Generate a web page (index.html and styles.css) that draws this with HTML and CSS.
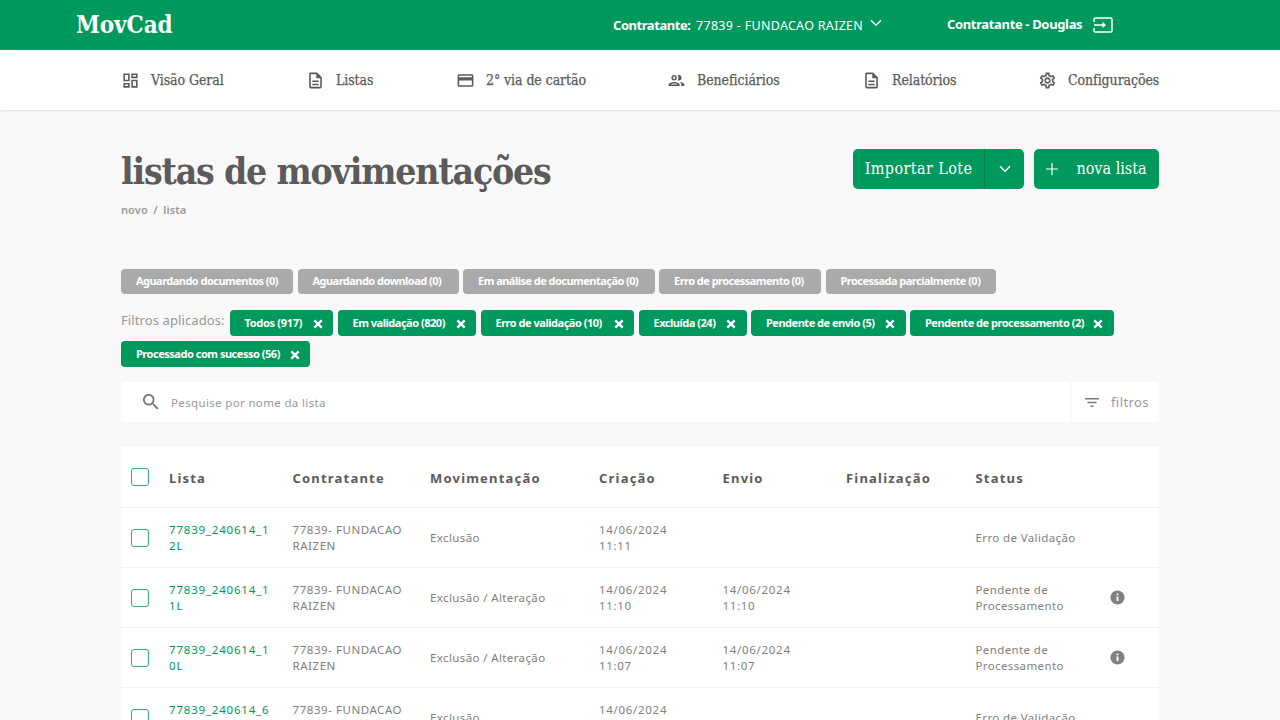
FILE: index.html
```
<!DOCTYPE html>
<html lang="pt-BR">
<head>
<meta charset="utf-8">
<title>MovCad</title>
<link rel="stylesheet" href="styles.css">
</head>
<body>
<svg class="symbols" aria-hidden="true">
  <symbol id="doc" viewBox="0 0 24 24"><path d="M8 16h8v2H8zm0-4h8v2H8zm6-10H6c-1.100 0-2 .9-2 2v16c0 1.100.890 2 1.990 2H18c1.100 0 2-.9 2-2V8l-6-6zm4 18H6V4h7v5h5v11z"/></symbol>
  <symbol id="info" viewBox="0 0 24 24"><path d="M12 2a10 10 0 1 0 0 20 10 10 0 0 0 0-20zm1.300 15h-2.600v-6.500h2.600zm0-8.200h-2.600V6.400h2.600z"/></symbol>
  <symbol id="close" viewBox="0 0 10 10"><path d="M1.300 1.300l7.400 7.400M8.700 1.300L1.300 8.700" fill="none" stroke="currentColor" stroke-width="2.400"/></symbol>
  <symbol id="chevron" viewBox="0 0 12 8"><path d="M1 1.200l5 5 5-5" fill="none" stroke="currentColor" stroke-width="1.500"/></symbol>
</svg>

<header class="topbar">
  <div class="brand">MovCad</div>
  <div class="contract"><b>Contratante:</b><span>77839 - FUNDACAO RAIZEN</span><svg class="chev"><use href="#chevron"/></svg></div>
  <div class="user"><b>Contratante - Douglas</b>
    <svg class="exit" viewBox="0 0 20 16"><path d="M1 5V2.300Q1 1 2.300 1h15.400Q19 1 19 2.300v11.400q0 1.300-1.300 1.300H2.300Q1 15 1 13.700V11" fill="none" stroke="currentColor" stroke-width="1.500"/><path d="M1 8h10" stroke="currentColor" stroke-width="1.500"/><path d="M9.500 4.800L13 8l-3.500 3.200z"/></svg>
  </div>
</header>

<nav class="menu">
  <a class="item"><svg class="ico" viewBox="0 0 24 24"><path d="M19 5v2h-4V5h4M9 5v6H5V5h4m10 8v6h-4v-6h4M9 17v2H5v-2h4M21 3h-8v6h8V3zM11 3H3v10h8V3zm10 8h-8v10h8V11zm-10 4H3v6h8v-6z"/></svg><span>Visão Geral</span></a>
  <a class="item"><svg class="ico"><use href="#doc"/></svg><span>Listas</span></a>
  <a class="item"><svg class="ico" viewBox="0 0 24 24"><path d="M20 4H4c-1.110 0-1.990.890-1.990 2L2 18c0 1.110.890 2 2 2h16c1.110 0 2-.890 2-2V6c0-1.110-.890-2-2-2zm0 14H4v-6h16v6zm0-10H4V6h16v2z"/></svg><span>2° via de cartão</span></a>
  <a class="item"><svg class="ico" viewBox="0 0 24 24"><path d="M9 13.750c-2.340 0-7 1.170-7 3.500V19h14v-1.750c0-2.330-4.660-3.500-7-3.500zM4.340 17c.840-.580 2.870-1.250 4.660-1.250s3.820.670 4.660 1.250H4.340zM9 12c1.930 0 3.500-1.570 3.500-3.500S10.930 5 9 5 5.500 6.570 5.500 8.500 7.070 12 9 12zm0-5c.830 0 1.500.670 1.500 1.500S9.830 10 9 10s-1.500-.670-1.500-1.500S8.170 7 9 7zm7.040 6.810c1.160.840 1.960 1.960 1.960 3.440V19h4v-1.750c0-2.020-3.500-3.170-5.960-3.440zM15 12c1.930 0 3.500-1.570 3.500-3.500S16.930 5 15 5c-.540 0-1.040.130-1.500.350.630.890 1 1.980 1 3.150s-.370 2.260-1 3.150c.460.220.960.350 1.500.350z"/></svg><span>Beneficiários</span></a>
  <a class="item"><svg class="ico"><use href="#doc"/></svg><span>Relatórios</span></a>
  <a class="item"><svg class="ico" viewBox="0 0 24 24"><path d="M19.430 12.980c.040-.320.070-.640.070-.980s-.030-.660-.070-.980l2.110-1.650c.190-.150.240-.420.120-.640l-2-3.460c-.090-.160-.260-.250-.440-.250-.060 0-.120.010-.170.030l-2.490 1c-.520-.400-1.080-.730-1.690-.980l-.380-2.650C14.460 2.180 14.250 2 14 2h-4c-.250 0-.460.180-.490.420l-.380 2.650c-.610.250-1.170.590-1.690.980l-2.490-1c-.060-.020-.120-.030-.180-.030-.170 0-.340.090-.430.250l-2 3.460c-.130.220-.070.490.120.640l2.110 1.650c-.040.320-.070.650-.070.980s.030.660.070.980l-2.110 1.650c-.190.150-.240.420-.120.640l2 3.460c.090.160.260.250.440.250.060 0 .120-.010.170-.030l2.490-1c.520.400 1.080.730 1.690.980l.380 2.650c.030.240.240.420.490.420h4c.250 0 .460-.180.490-.420l.380-2.650c.610-.250 1.170-.590 1.690-.980l2.490 1c.060.020.120.030.180.030.170 0 .340-.090.430-.250l2-3.460c.120-.220.070-.490-.120-.640l-2.110-1.650zm-1.980-1.710c.040.310.050.520.050.730s-.020.430-.050.730l-.140 1.130.890.700 1.080.840-.700 1.210-1.270-.510-1.040-.420-.900.680c-.430.320-.840.560-1.250.730l-1.060.430-.160 1.130-.200 1.350h-1.400l-.190-1.350-.160-1.130-1.060-.430c-.430-.180-.830-.410-1.230-.710l-.910-.700-1.060.430-1.270.510-.700-1.210 1.080-.840.890-.700-.140-1.130c-.030-.310-.050-.540-.050-.740s.020-.430.050-.730l.140-1.130-.890-.700-1.080-.840.700-1.210 1.270.510 1.040.420.900-.680c.430-.320.840-.560 1.250-.730l1.060-.430.160-1.130.200-1.350h1.390l.190 1.350.160 1.130 1.060.430c.430.180.830.410 1.230.710l.910.700 1.060-.430 1.270-.510.700 1.210-1.070.850-.890.700.140 1.130zM12 8c-2.210 0-4 1.790-4 4s1.790 4 4 4 4-1.790 4-4-1.790-4-4-4zm0 6c-1.100 0-2-.9-2-2s.9-2 2-2 2 .9 2 2-.9 2-2 2z"/></svg><span>Configurações</span></a>
</nav>

<main class="page">
  <div class="heading">
    <div>
      <h1>listas de movimentações</h1>
      <div class="crumbs"><span>novo</span><span>/</span><span>lista</span></div>
    </div>
    <div class="actions">
      <button class="btn import"><span>Importar Lote</span></button><button class="btn drop"><svg class="chev"><use href="#chevron"/></svg></button>
      <button class="btn new"><svg class="plus" viewBox="0 0 12 12"><path d="M6 0v12M0 6h12" stroke="currentColor" stroke-width="1.200"/></svg><span>nova lista</span></button>
    </div>
  </div>

  <div class="chips gray">
    <span class="chip g1"><span>Aguardando documentos (0)</span></span>
    <span class="chip g2"><span>Aguardando download (0)</span></span>
    <span class="chip g3"><span>Em análise de documentação (0)</span></span>
    <span class="chip g4"><span>Erro de processamento (0)</span></span>
    <span class="chip g5"><span>Processada parcialmente (0)</span></span>
  </div>
  <div class="chips green">
    <span class="label"><span>Filtros aplicados:</span></span>
    <span class="chip c1"><span>Todos (917)</span><svg><use href="#close"/></svg></span>
    <span class="chip c2"><span>Em validação (820)</span><svg><use href="#close"/></svg></span>
    <span class="chip c3"><span>Erro de validação (10)</span><svg><use href="#close"/></svg></span>
    <span class="chip c4"><span>Excluída (24)</span><svg><use href="#close"/></svg></span>
    <span class="chip c5"><span>Pendente de envio (5)</span><svg><use href="#close"/></svg></span>
    <span class="chip c6"><span>Pendente de processamento (2)</span><svg><use href="#close"/></svg></span>
    <span class="chip c7"><span>Processado com sucesso (56)</span><svg><use href="#close"/></svg></span>
  </div>

  <div class="search">
    <div class="field"><svg class="lens" viewBox="3 3 18 18"><path d="M15.500 14h-.790l-.280-.270C15.410 12.590 16 11.110 16 9.500 16 5.910 13.090 3 9.500 3S3 5.910 3 9.500 5.910 16 9.500 16c1.610 0 3.090-.590 4.230-1.570l.270.280v.790l5 4.990L20.490 19l-4.990-5zm-6 0C7.010 14 5 11.990 5 9.500S7.010 5 9.500 5 14 7.010 14 9.500 11.990 14 9.500 14z"/></svg><span>Pesquise por nome da lista</span></div>
    <div class="filter"><svg class="lines" viewBox="0 0 14 9"><path d="M0 .8h14M2.500 4.500h9M5.500 8.200h3" stroke="currentColor" stroke-width="1.500"/></svg><span>filtros</span></div>
  </div>

  <div class="table">
    <div class="row head"><i class="check"></i><span>Lista</span><span>Contratante</span><span>Movimentação</span><span>Criação</span><span>Envio</span><span>Finalização</span><span>Status</span></div>
    <div class="row"><i class="check"></i><a>77839_240614_1<br>2L</a><span>77839- FUNDACAO<br>RAIZEN</span><span class="txt">Exclusão</span><span class="dt">14/06/2024<br>11:11</span><span></span><span></span><span class="txt">Erro de Validação</span></div>
    <div class="row"><i class="check"></i><a>77839_240614_1<br>1L</a><span>77839- FUNDACAO<br>RAIZEN</span><span class="txt">Exclusão / Alteração</span><span class="dt">14/06/2024<br>11:10</span><span class="dt">14/06/2024<br>11:10</span><span></span><span class="txt">Pendente de<br>Processamento</span><svg class="info"><use href="#info"/></svg></div>
    <div class="row"><i class="check"></i><a>77839_240614_1<br>0L</a><span>77839- FUNDACAO<br>RAIZEN</span><span class="txt">Exclusão / Alteração</span><span class="dt">14/06/2024<br>11:07</span><span class="dt">14/06/2024<br>11:07</span><span></span><span class="txt">Pendente de<br>Processamento</span><svg class="info"><use href="#info"/></svg></div>
    <div class="row"><i class="check"></i><a>77839_240614_6<br>L</a><span>77839- FUNDACAO<br>RAIZEN</span><span class="txt">Exclusão</span><span class="dt">14/06/2024<br>11:05</span><span></span><span></span><span class="txt">Erro de Validação</span></div>
  </div>
</main>
</body>
</html>
```

FILE: styles.css
```
* { box-sizing: border-box; }
html, body { height: 100%; }
body { margin: 0; overflow: hidden; background: #f8f8f8; color: #5b5b5b; font-family: "Noto Sans", "Open Sans", sans-serif; }
svg { fill: currentColor; flex: none; display: block; }
.symbols { display: none; }
span, b, a { white-space: nowrap; }

.topbar { height: 50px; background: #00995d; color: #fff; display: grid; grid-template-columns: 537px 334px 1fr; padding-left: 76px; align-items: center; }
.brand { font: bold 24px/50px "DejaVu Serif Condensed", "DejaVu Serif", serif; letter-spacing: -.1px; }
.contract, .user { display: flex; align-items: center; font-size: 13px; }
.contract b { font-size: 13px; letter-spacing: -.45px; width: 83px; }
.contract span { width: 174px; font-size: 12.500px; letter-spacing: .3px; }
.contract .chev { width: 12px; height: 8px; margin-bottom: 4px; }
.user { letter-spacing: -.35px; padding-bottom: 2px; }
.user b { width: 146px; }
.exit { width: 20px; height: 16px; margin-top: 2px; }

.menu { height: 60px; background: #fff; box-shadow: 0 1px 2px #ddd; padding-left: 121px; display: grid; grid-template-columns: 185px 150px 211px 195px 176px 1fr; align-items: center; font: 14px "DejaVu Serif Condensed", "DejaVu Serif", serif; letter-spacing: -.08px; }
.item { display: flex; align-items: center; gap: 10px; }
.item span { -webkit-text-stroke: .25px currentColor; }
.ico { width: 19px; height: 19px; margin-right: 1px; }

.page { width: 1038px; margin: 0 auto; }
.heading { display: flex; justify-content: space-between; height: 159px; padding-top: 39px; }
h1 { margin: 0; font: bold 37px/44px "DejaVu Serif Condensed", "DejaVu Serif", serif; letter-spacing: -1.180px; white-space: nowrap; }
.crumbs { display: flex; gap: 5.500px; font-size: 11px; line-height: 16px; font-weight: 600; color: #999; margin-top: 9px; letter-spacing: .1px; }
.actions { display: flex; }
.btn { border: 0; height: 40px; background: #00995d; color: #fff; padding: 0 0 1px; font: 16px "DejaVu Serif Condensed", "DejaVu Serif", serif; display: flex; align-items: center; justify-content: center; border-radius: 5px; }
.import { width: 132px; border-radius: 5px 0 0 5px; border-right: 1px solid #007d4c; letter-spacing: .4px; }
.drop { width: 39px; border-radius: 0 5px 5px 0; margin-right: 10px; }
.drop .chev { width: 12px; height: 8px; }
.new { width: 125px; gap: 18px; }
.plus { width: 12px; height: 12px; }

.chips { display: flex; flex-wrap: wrap; column-gap: 4.500px; row-gap: 5px; }
.chip { height: 26px; border-radius: 4px; background: #00995d; color: #fff; font-size: 11px; font-weight: bold; letter-spacing: -.48px; display: flex; align-items: center; justify-content: space-between; padding: 0 10.500px 1px 15px; }
.chip svg { width: 10px; height: 10px; margin-top: 4px; }
.gray .chip { height: 25px; background: #aaa; padding-bottom: 2px; letter-spacing: -.53px; }
.g1 { width: 172px; } .g2 { width: 161px; } .g3 { width: 191.500px; } .g4 { width: 162px; } .g5 { width: 170.500px; }
.green { margin: 15.500px 0 15.500px; }
.label { width: 104px; font-size: 13px; color: #999; line-height: 20px; letter-spacing: .1px; }
.green .c1 { width: 103.500px; letter-spacing: -.3px; } .c2 { width: 138.500px; } .c3 { width: 153.500px; } .c4 { width: 108px; } .c5 { width: 154.500px; } .c6 { width: 203.500px; } .c7 { width: 189px; }

.search { display: flex; gap: 2px; height: 40px; color: #999; margin-bottom: 25px; }
.field, .filter { background: #fff; border-radius: 4px; display: flex; align-items: center; }
.field { width: 949px; padding-left: 22px; font-size: 11.500px; letter-spacing: .35px; }
.lens { width: 16px; height: 16px; color: #777; margin-right: 12px; }
.filter { width: 87px; padding-left: 13px; font-size: 13px; letter-spacing: .4px; border-radius: 0 4px 4px 0; }
.lines { width: 14px; height: 9px; color: #777; margin-right: 12px; }

.table { background: #fff; }
.row { height: 60px; border-bottom: 1px solid #f2f2f2; display: grid; grid-template-columns: 38px 123.500px 137.500px 169px 123.500px 123.500px 129.500px 133px 1fr; padding-left: 10px; align-items: center; font-size: 11.500px; line-height: 16px; color: #808080; letter-spacing: .55px; }
.row a { color: #00995d; letter-spacing: .8px; }
.row .dt { letter-spacing: .7px; }
.row .txt { letter-spacing: .38px; }
.head { height: 61px; padding-top: 2px; font-size: 13px; font-weight: bold; color: #5b5b5b; letter-spacing: 1.200px; }
.check { width: 18px; height: 18px; border: 1.500px solid #32aa7c; border-radius: 3px; }
.head .check { margin-bottom: 2px; }
.info { width: 17px; height: 17px; }
```
